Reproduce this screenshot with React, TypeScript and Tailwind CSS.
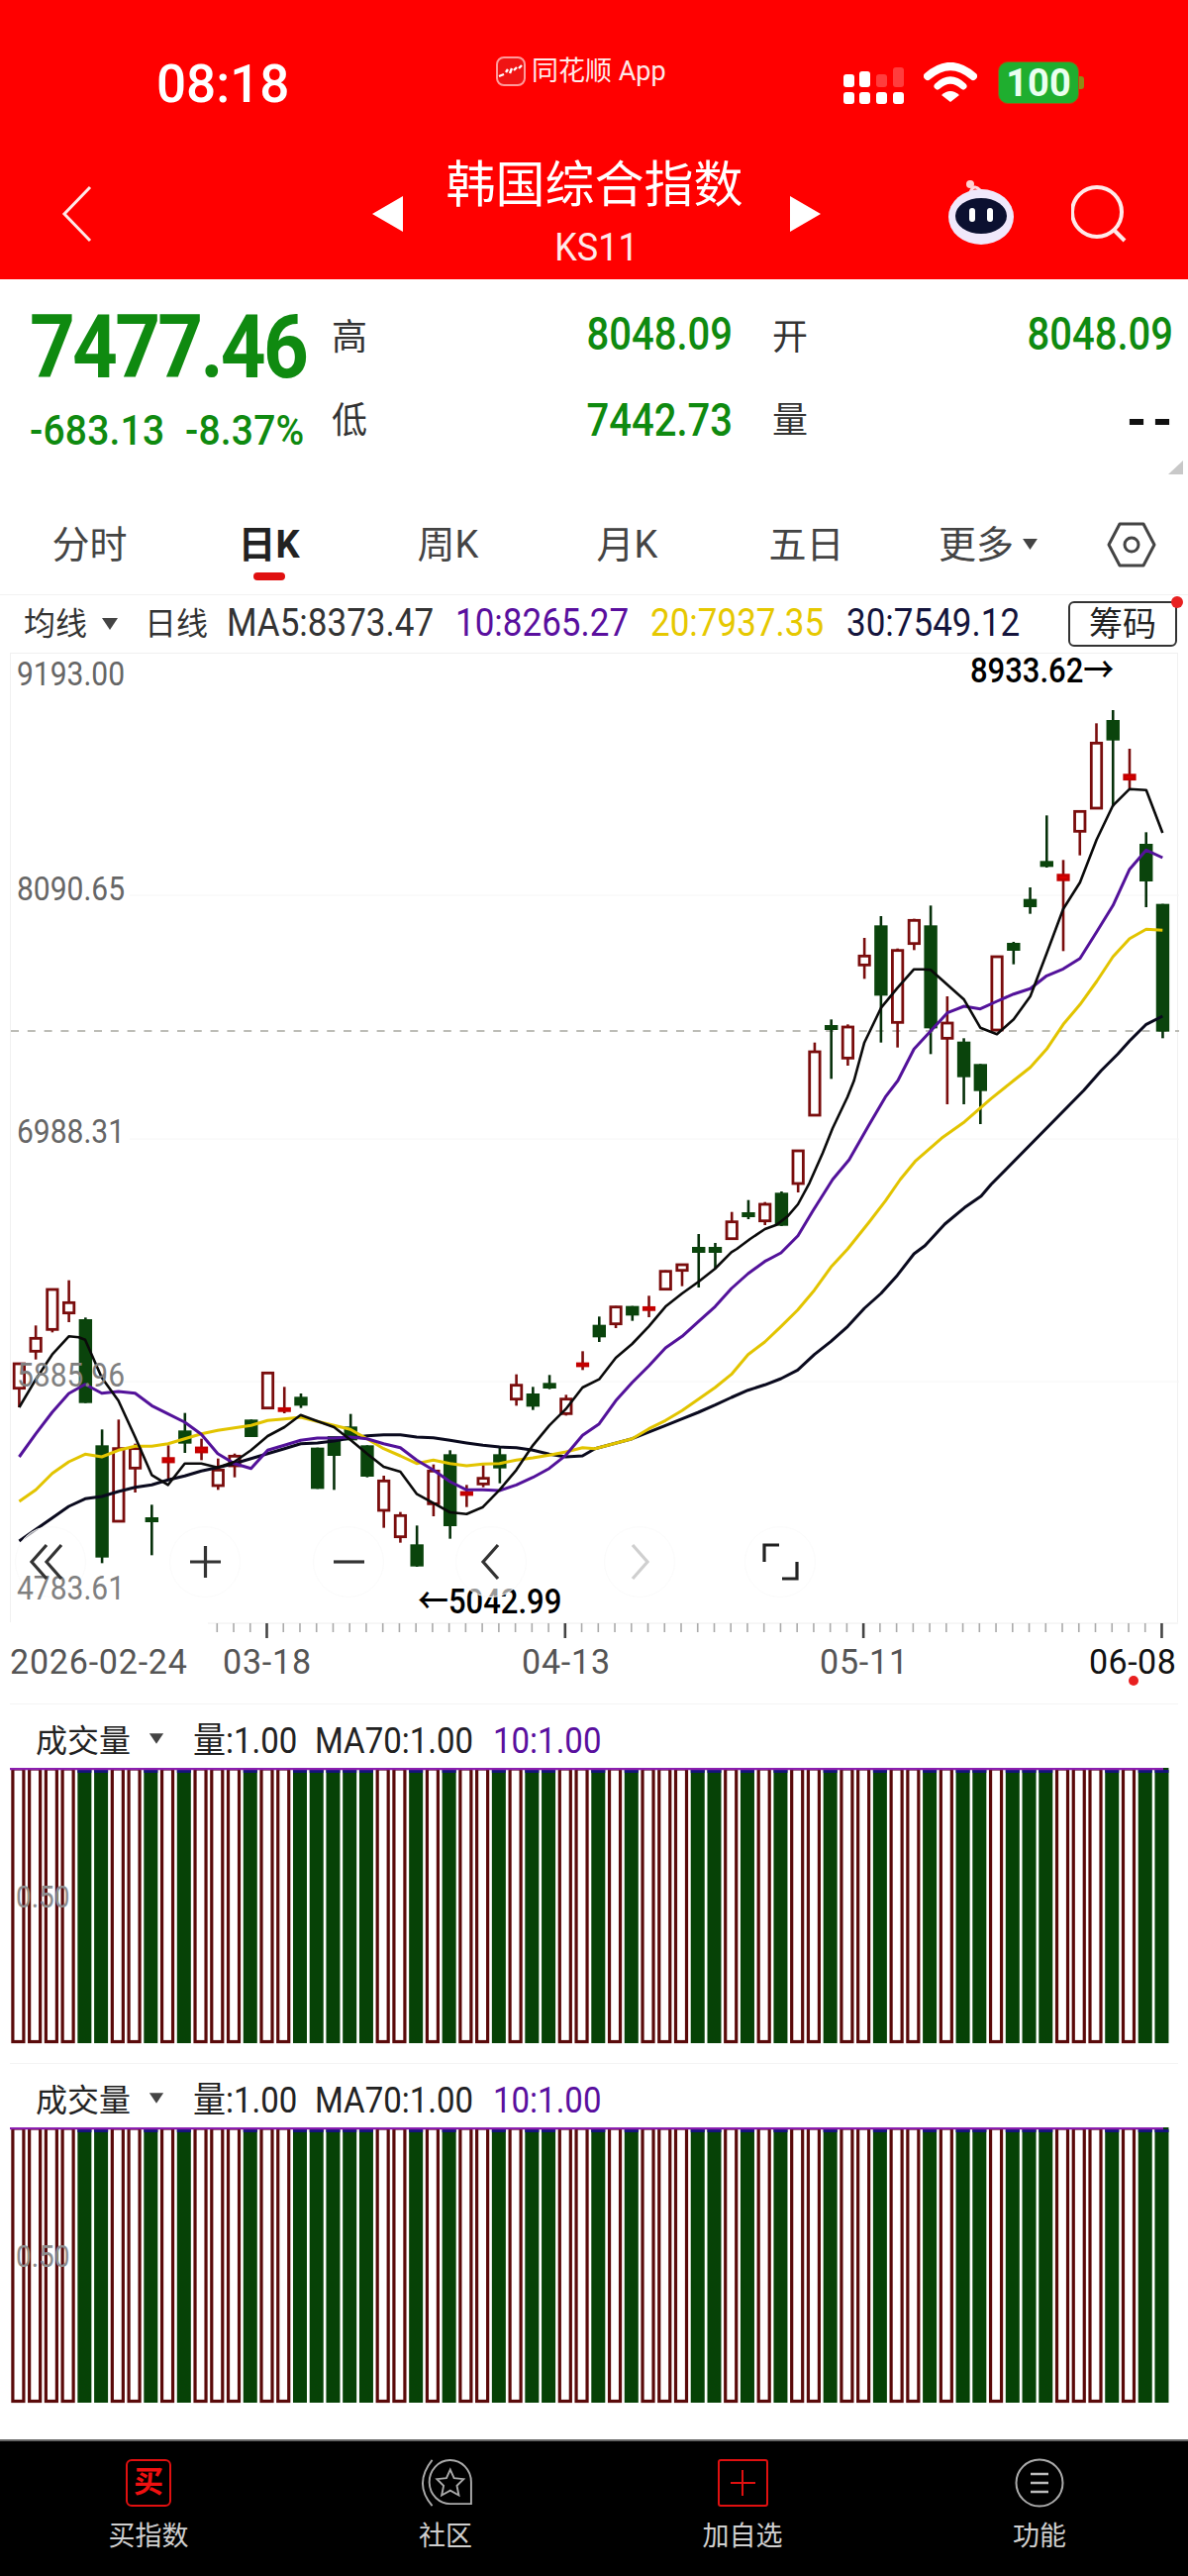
import React from "react";

type P = [number, number];
const z4 = (a: number[]): P[] => pairs(a).map(([x, y]) => [x / 2.613, 1250 + y / 3]);
const z5 = (a: number[]): P[] => pairs(a).map(([x, y]) => [600 + x / 2.613, 1250 + y / 3]);
const z9 = (a: number[]): P[] => pairs(a).map(([x, y]) => [600 + x / 3, 1090 + y / 3]);
const z3 = (a: number[]): P[] => pairs(a).map(([x, y]) => [600 + x / 2.613, 650 + y / 3]);
function pairs(a: number[]): P[] {
  const r: P[] = [];
  for (let i = 0; i < a.length; i += 2) r.push([a[i], a[i + 1]]);
  return r;
}
const pts = (p: P[]) => p.map(([x, y]) => `${x.toFixed(1)},${y.toFixed(1)}`).join(" ");

const ma5 = [
  ...z4([48,510,92,425,135,350,179,295,205,298,222,305,266,420,310,490,354,600,398,715,441,745,485,680,529,680,572,692,616,675,660,640,704,597,748,570,791,533,835,552,879,570,922,608,966,650,1010,690,1054,705,1097,772,1141,800,1185,828,1229,833,1272,812,1316,760,1360,700,1404,625,1447,565,1491,515,1535,450]),
  ...z5([11,425,55,360,98,318,142,265,186,205,230,165,273,130,317,90,360,40]),
  ...z9([430,510,470,480,515,450,550,437,585,410,615,375,650,310,690,220,720,145,765,50,785,0]),
  ...z3([711,1205,755,1100,798,1040,842,983,866,983,886,985,930,1030,974,1075,1017,1160,1061,1180,1105,1135,1149,1065,1192,935,1236,800,1280,720,1324,590,1367,487,1411,437,1455,440,1498,570]),
];
const ma10 = [
  ...z4([48,660,92,590,135,525,179,468,222,440,266,467,310,462,354,467,398,505,441,530,485,555,529,592,572,650,616,680,660,695,704,640,748,625,791,610,835,603,879,603,922,600,966,605,1010,620,1054,632,1097,670,1141,700,1185,735,1229,760,1272,760,1316,762,1360,745,1404,722,1447,695,1491,655,1535,595]),
  ...z5([11,560,55,490,98,435,142,385,186,330,230,295,273,250,317,205,360,150,404,105,448,68,491,42]),
  ...z9([615,470,660,395,720,300,770,240,830,135,880,50,918,0]),
  ...z3([842,1225,886,1170,930,1115,974,1095,1017,1103,1061,1080,1105,1058,1149,1042,1192,1003,1236,982,1280,950,1324,870,1367,790,1411,680,1455,622,1498,645]),
];
const ma20 = [
  ...z4([48,795,92,760,135,710,179,675,222,652,266,660,310,640,354,628,398,628,441,620,485,605,529,590,572,580,616,572,660,565,704,550,748,545,791,540,835,553,879,565,922,577,966,605,1010,635,1054,657,1097,680,1141,670,1185,680,1229,687,1272,682,1316,680,1360,670,1404,663,1447,655,1491,645,1535,632]),
  ...z5([0,635,98,605,142,575,186,550,230,520,273,485,317,450,360,410,404,350,448,312,491,265,535,215,579,155,623,85,667,30]),
  ...z9([830,430,880,365,925,300,970,245,1050,175,1120,125,1200,55]),
  ...z3([1105,1320,1149,1280,1192,1225,1236,1150,1280,1090,1324,1020,1367,945,1411,890,1455,862,1498,865]),
];
const ma30 = [
  ...z4([48,915,92,880,135,845,179,810,222,787,266,780,310,765,354,752,398,745,441,730,485,718,529,703,572,692,616,680,660,665,704,650,748,635,791,620,835,618,879,612,922,603,966,596,1010,593,1054,593,1097,600,1141,602,1185,610,1229,618,1272,625,1316,630,1360,632,1404,640,1447,652,1491,660,1535,657]),
  ...z5([0,635,98,605,186,565,230,545,273,525,317,503,360,480,404,458,448,442,491,423,535,397,579,350,623,310,667,265,711,210,755,165,798,110,842,45]),
  ...z9([1000,500,1060,435,1120,385,1170,350,1200,315]),
  ...z3([1290,1350,1336,1290,1380,1240,1411,1200,1455,1150,1498,1125]),
];

// up?, wick top, body top, body bottom, wick bottom
type C = [boolean, number, number, number, number];
const a = (u: boolean, w1: number, b1: number, b2: number, w2: number): C => [u, 1250 + w1 / 3, 1250 + b1 / 3, 1250 + b2 / 3, 1250 + w2 / 3];
const b = (u: boolean, w1: number, b1: number, b2: number, w2: number): C => [u, 650 + w1 / 3, 650 + b1 / 3, 650 + b2 / 3, 650 + w2 / 3];
const c = (u: boolean, w1: number, b1: number, b2: number, w2: number): C => [u, w1, b1, b2, w2];
const U = true;
const D = false;
const candles: C[] = [
  a(U,375,375,455,510), a(U,262,298,343,365), a(U,150,150,277,283), a(U,125,190,227,252),
  a(D,238,243,497,497), a(D,577,625,965,982), a(U,547,632,858,858), a(U,620,632,697,768),
  a(D,805,843,858,958), a(U,625,662,678,730), a(D,527,580,620,648), a(U,605,630,648,670),
  a(U,665,697,750,760), a(U,650,655,690,722), a(D,547,547,600,600), a(U,403,403,515,515),
  a(U,448,511,522,528), a(D,468,478,505,512), a(D,632,632,757,757), a(D,597,597,657,760),
  a(D,530,568,610,610), a(D,625,625,720,722), a(U,717,730,825,875), a(U,827,835,905,920),
  a(D,868,925,992,993), a(U,683,700,805,840), a(D,640,652,870,908), a(U,745,765,775,812),
  a(U,685,722,745,752), a(D,632,652,695,740), a(U,410,440,488,505), a(D,448,468,508,518),
  a(D,412,436,453,455), a(U,472,482,532,535), a(U,340,375,387,397), a(D,235,260,298,312),
  a(U,203,203,260,270), a(D,203,203,232,248), a(U,172,205,215,237), a(U,95,95,155,155),
  a(U,75,75,98,143), c(D,1245,1258,1264,1299), c(D,1254,1258,1264,1280), c(U,1222.7,1231.7,1250.7,1251),
  c(D,1210.7,1223,1228,1230), c(U,1212.7,1214,1232.7,1236), c(D,1202,1203.3,1236.7,1237), c(U,1160,1160,1195,1203),
  b(U,1205,1230,1428,1428), b(D,1135,1152,1167,1315), b(U,1150,1155,1255,1275), b(U,888,940,973,1012),
  b(D,822,850,1063,1205), b(U,920,923,1147,1220), b(U,830,832,908,925), b(D,790,850,1162,1240),
  b(U,1065,1143,1195,1392), b(D,1192,1202,1310,1392), b(D,1270,1270,1352,1452), b(U,942,942,1170,1170),
  b(D,900,903,927,968), b(D,735,770,795,815), b(D,517,655,673,675), b(U,652,695,715,928),
  b(U,502,502,568,638), b(U,238,295,498,498), b(D,198,228,290,490), b(U,315,392,410,435),
  b(D,568,603,717,795), b(D,785,785,1172,1192),
];
const cx = (i: number) => 18.4 + 16.74 * i;

const RED = "#7a0d0d";
const GREEN = "#0a440c";

function Candles() {
  return (
    <>
      {candles.map(([up, w1, b1, b2, w2], i) => {
        const x = cx(i);
        const small = b2 - b1 < 7;
        const stroke = up ? (small ? "#c40000" : RED) : GREEN;
        return (
          <g key={i}>
            <line x1={x} x2={x} y1={w1} y2={w2} stroke={up ? RED : "#06300a"} strokeWidth={2.6} />
            {up ? (
              <rect x={x - 5.2} y={b1 + 1} width={10.4} height={Math.max(b2 - b1 - 2, 2)} fill={small ? "#e00000" : "#fff"} stroke={stroke} strokeWidth={2.8} />
            ) : (
              <rect x={x - 6.7} y={b1} width={13.4} height={b2 - b1} fill={GREEN} />
            )}
          </g>
        );
      })}
    </>
  );
}

function Caret({ className }: { className: string }) {
  return (
    <svg viewBox="0 0 18 14" className={className}>
      <polygon points="1,1 17,1 9,13" fill="#444" />
    </svg>
  );
}

function Chart() {
  return (
    <svg viewBox="0 659 1200 979" className="absolute left-[-10px] top-0 w-[1200px] h-[979px]">
      <line x1="130" x2="1190" y1="903" y2="903" stroke="#f6f6f6" strokeWidth="1" />
      <line x1="130" x2="1190" y1="1149" y2="1149" stroke="#f6f6f6" strokeWidth="1" />
      <line x1="10" x2="1190" y1="1394" y2="1394" stroke="#f6f6f6" strokeWidth="1" />
      <line x1="10" x2="1190" y1="1040" y2="1040" stroke="#a8a8a0" strokeWidth="1.5" strokeDasharray="8 8.8" />
      <Candles />
      <polyline points={pts(ma30)} fill="none" stroke="#0a0a1e" strokeWidth="3" strokeLinejoin="round" />
      <polyline points={pts(ma20)} fill="none" stroke="#e2c400" strokeWidth="3" strokeLinejoin="round" />
      <polyline points={pts(ma10)} fill="none" stroke="#53129a" strokeWidth="3" strokeLinejoin="round" />
      <polyline points={pts(ma5)} fill="none" stroke="#0a0a0a" strokeWidth="2.6" strokeLinejoin="round" />
    </svg>
  );
}

function Ticks() {
  const items = [];
  for (let i = 12; i < 70; i++) {
    const major = i === 15 || i === 33 || i === 51 || i === 69;
    items.push(
      <line key={i} x1={cx(i)} x2={cx(i)} y1={1} y2={major ? 16 : 10} stroke={major ? "#444" : "#aaa"} strokeWidth={major ? 2.6 : 1.6} />
    );
  }
  return (
    <svg viewBox="0 0 1200 20" className="absolute left-0 top-0 w-[1200px] h-[20px]">
      <line x1="210" x2="1190" y1="1" y2="1" stroke="#eeeeee" strokeWidth="1" />
      {items}
    </svg>
  );
}

function VolumeBars() {
  return (
    <svg viewBox="0 0 1200 280" className="absolute left-[-10px] top-0 w-[1200px] h-[280px]">
      {candles.map(([up], i) => {
        const x = cx(i);
        return up ? (
          <rect key={i} x={x - 5.5} y={1} width={11} height={275.5} fill="#fff" stroke="#5a0a0a" strokeWidth={3.2} />
        ) : (
          <g key={i}>
            <rect x={x - 7} y={0} width={14} height={278} fill="#064206" />
            <rect x={x - 7} y={2} width={14} height={3} fill="#14127a" />
          </g>
        );
      })}
      <line x1="10" x2="1175" y1="1" y2="1" stroke="#8b1fb0" strokeWidth="2.6" />
    </svg>
  );
}

function VolumePanel() {
  return (
    <section className="ml-[10px] w-[1180px] h-[345px] border-t border-[#f4f4f4] shrink-0">
      <div className="h-[64px] pt-[10px] flex items-center pl-[26px] text-[33px] text-[#222] whitespace-nowrap">
        <span className="text-[32px] w-[97px]">成交量</span>
        <Caret className="ml-[17px] w-[16px] h-[13px] mb-[6px]" />
        <span className="ml-[29px] w-[105px] scale-y-[1.1]">量:1.00</span>
        <span className="ml-[18px] w-[162px] scale-y-[1.1]">MA70:1.00</span>
        <span className="ml-[18px] text-[#5a0f9e] scale-y-[1.1]">10:1.00</span>
      </div>
      <div className="relative h-[280px]">
        <VolumeBars />
        <span className="absolute left-[6px] top-[113px] text-[28px] leading-[36px] text-[#8d8d8d] scale-y-[1.15]">0.50</span>
      </div>
    </section>
  );
}

function Circle({ className }: { className: string }) {
  return <div className={`absolute top-[881px] w-[72px] h-[72px] rounded-full bg-white/60 border border-[#fbfbfb] ${className}`} />;
}

export default function App() {
  return (
    <div className="w-[1200px] h-[2601px] bg-white flex flex-col overflow-hidden font-[Roboto,'Noto_Sans_CJK_SC',sans-serif]">
      {/* red header */}
      <header className="h-[282px] bg-[#ff0000] text-white shrink-0">
        <div className="h-[150px] flex items-start">
          <span className="ml-[158px] mt-[53px] w-[342px] text-[53px] leading-[64px] font-medium">08:18</span>
          <div className="w-[352px] mt-[55px] h-[34px] flex items-center">
            <svg viewBox="0 0 32 32" className="w-[32px] h-[32px] shrink-0">
              <rect x="2" y="2" width="28" height="28" rx="7" fill="#f01414" stroke="#ff9a9a" strokeWidth="2" />
              <path d="M4 21 L9 19 M11 17 L13 14 M15 18 L17 13 M19 15 L22 12 M24 13 L27 10" stroke="#fff" strokeWidth="2.4" fill="none" />
            </svg>
            <span className="ml-[5px] text-[27px] leading-[34px] text-[#ffe9e9]">同花顺 App</span>
          </div>
          <svg viewBox="0 0 62 40" className="mt-[68px] w-[62px] h-[40px] shrink-0">
            <rect x="0" y="7" width="11" height="13" rx="3" fill="#fff" />
            <rect x="16" y="4" width="11" height="16" rx="3" fill="#fff" />
            <rect x="33" y="7" width="11" height="13" rx="3" fill="#ff3d3d" />
            <rect x="50" y="0" width="11" height="20" rx="3" fill="#ff3d3d" />
            <rect x="0" y="25" width="11" height="12" rx="3" fill="#fff" />
            <rect x="16" y="25" width="11" height="12" rx="3" fill="#fff" />
            <rect x="33" y="25" width="11" height="12" rx="3" fill="#fff" />
            <rect x="50" y="25" width="11" height="12" rx="3" fill="#fff" />
          </svg>
          <svg viewBox="0 0 54 40" className="ml-[19px] mt-[63px] w-[54px] h-[40px] shrink-0">
            <path d="M4 14 Q27 -6 50 14" fill="none" stroke="#fff" strokeWidth="8" strokeLinecap="round" />
            <path d="M14 24 Q27 12 40 24" fill="none" stroke="#fff" strokeWidth="7" strokeLinecap="round" />
            <path d="M18 33 Q27 25 36 33 L27 40 Z" fill="#fff" />
          </svg>
          <div className="ml-[21px] mt-[62px] w-[82px] h-[43px] rounded-[10px] bg-[#1fae2f] border border-[#b34a10] flex items-center justify-center text-[38px] leading-none font-bold text-[#eafff0] shrink-0">100</div>
          <div className="mt-[77px] w-[5px] h-[13px] rounded-r-[3px] bg-[#8f8a16] shrink-0" />
        </div>
        <div className="h-[132px] flex items-center">
          <div className="w-[376px] pl-[62px] shrink-0">
            <svg viewBox="0 0 32 58" className="w-[32px] h-[58px]">
              <path d="M29 2 L3 29 L29 56" fill="none" stroke="#ffe9e9" strokeWidth="3" />
            </svg>
          </div>
          <svg viewBox="0 0 31 36" className="w-[31px] h-[36px] shrink-0">
            <polygon points="31,0 31,36 0,18" fill="#fff" />
          </svg>
          <div className="w-[391px] h-full flex flex-col items-center shrink-0">
            <span className="mt-[7px] ml-[-4px] text-[50px] leading-[60px] whitespace-nowrap">韩国综合指数</span>
            <span className="mt-[11px] text-[36px] leading-[44px] text-[#ffe9e9] scale-y-[1.1]">KS11</span>
          </div>
          <svg viewBox="0 0 31 36" className="w-[31px] h-[36px] shrink-0">
            <polygon points="0,0 0,36 31,18" fill="#fff" />
          </svg>
          <svg viewBox="0 0 70 66" className="ml-[127px] w-[70px] h-[66px] shrink-0 mt-[-2px]">
            <path d="M24 12 Q28 3 34 10" fill="none" stroke="#ffd9e0" strokeWidth="3" />
            <circle cx="24" cy="4" r="4" fill="#ffd0d0" />
            <ellipse cx="35" cy="37" rx="33" ry="28" fill="#f0e8fb" />
            <ellipse cx="35" cy="36" rx="26" ry="18" fill="#0b1030" />
            <rect x="23" y="28" width="6" height="14" rx="3" fill="#fff" />
            <rect x="41" y="28" width="6" height="14" rx="3" fill="#fff" />
          </svg>
          <svg viewBox="0 0 56 58" className="ml-[56px] w-[56px] h-[58px] shrink-0">
            <circle cx="26" cy="27" r="25" fill="none" stroke="#ffeaea" strokeWidth="4" />
            <path d="M44 46 L54 56" stroke="#ffeaea" strokeWidth="4" />
          </svg>
        </div>
      </header>

      {/* quote */}
      <section className="relative h-[218px] pl-[30px] pt-[17px] flex shrink-0">
        <div className="w-[305px] shrink-0 text-[#0f8a10]">
          <div className="mt-[17px] h-[70px] text-[80px] leading-[70px] font-bold tracking-[-2.8px] whitespace-nowrap scale-y-[1.12]">7477.46</div>
          <div className="mt-[29px] h-[40px] flex text-[39px] leading-[40px] font-medium whitespace-nowrap scale-y-[1.08]">
            <span className="w-[157px] tracking-[0.2px]">-683.13</span>
            <span className="tracking-[0.2px]">-8.37%</span>
          </div>
        </div>
        <div className="grid grid-cols-[35px_370px_75px_370px] auto-rows-[84px] items-center text-[#333] text-[36px]">
          <span>高</span>
          <span className="text-right text-[#0f8a10] text-[40px] font-medium mt-[-6px] scale-y-[1.14]">8048.09</span>
          <span className="pl-[40px]">开</span>
          <span className="text-right text-[#0f8a10] text-[40px] font-medium mt-[-6px] scale-y-[1.14]">8048.09</span>
          <span>低</span>
          <span className="text-right text-[#0f8a10] text-[40px] font-medium scale-y-[1.14]">7442.73</span>
          <span className="pl-[40px]">量</span>
          <span className="text-right text-[#111] text-[50px] font-bold font-['Liberation_Mono'] tracking-[-4px]">--</span>
        </div>
        <svg viewBox="0 0 15 14" className="absolute right-[5px] top-[183px] w-[15px] h-[14px]">
          <polygon points="15,0 15,14 0,14" fill="#c8c8c8" />
        </svg>
      </section>

      {/* tabs */}
      <nav className="h-[100px] flex items-center text-[#444] text-[38px] shrink-0">
        <span className="w-[181px] text-center">分时</span>
        <span className="relative w-[181px] text-center font-bold text-[#222]">
          日K
          <span className="absolute left-[75px] top-[56px] w-[32px] h-[8px] rounded-full bg-[#e01010]" />
        </span>
        <span className="w-[181px] text-center">周K</span>
        <span className="w-[181px] text-center">月K</span>
        <span className="w-[181px] text-center">五日</span>
        <span className="w-[181px] flex items-center justify-center pl-[6px]">
          更多
          <Caret className="ml-[8px] w-[17px] h-[13px] mb-[2px]" />
        </span>
        <div className="flex-1 flex justify-center">
          <svg viewBox="0 0 50 46" className="w-[50px] h-[46px]">
            <polygon points="2,23 13,2 37,2 48,23 37,44 13,44" fill="none" stroke="#444" strokeWidth="3" strokeLinejoin="round" />
            <circle cx="25" cy="23" r="7" fill="none" stroke="#444" strokeWidth="3" />
          </svg>
        </div>
      </nav>

      {/* MA legend */}
      <div className="relative h-[59px] flex items-center border-t border-[#f2f2f2] text-[35px] text-[#333] whitespace-nowrap shrink-0">
        <span className="ml-[24px] w-[64px] text-[32px]">均线</span>
        <Caret className="ml-[14px] w-[18px] h-[14px]" />
        <span className="ml-[26px] w-[64px] text-[32px]">日线</span>
        <span className="ml-[19px] w-[211px] scale-y-[1.1]">MA5:8373.47</span>
        <span className="ml-[20px] w-[177px] text-[#5a0f9e] scale-y-[1.1]">10:8265.27</span>
        <span className="ml-[20px] w-[176px] text-[#e6c800] scale-y-[1.1]">20:7937.35</span>
        <span className="ml-[22px] w-[175px] text-[#14143c] scale-y-[1.1]">30:7549.12</span>
        <span className="ml-[49px] w-[110px] h-[46px] rounded-md border-2 border-[#333] text-[34px] leading-[42px] text-center text-[#222]">筹码</span>
        <span className="absolute left-[1183px] top-[1px] w-[12px] h-[12px] rounded-full bg-[#e82020]" />
      </div>

      {/* main chart */}
      <div className="relative ml-[10px] w-[1180px] h-[979px] border-x border-t border-[#f0f0f0] box-border shrink-0">
        <Chart />
        <span className="absolute left-[6px] top-[3px] text-[30px] leading-[36px] text-[#666] scale-y-[1.12]">9193.00</span>
        <span className="absolute left-[6px] top-[220px] text-[30px] leading-[36px] text-[#666] scale-y-[1.12]">8090.65</span>
        <span className="absolute left-[6px] top-[465px] text-[30px] leading-[36px] text-[#666] scale-y-[1.12]">6988.31</span>
        <span className="absolute left-[6px] top-[711px] text-[30px] leading-[36px] text-[#808080] scale-y-[1.12]">5885.96</span>
        <span className="absolute left-[969px] top-0 text-[31px] leading-[36px] font-medium text-black whitespace-nowrap scale-y-[1.14]">8933.62→</span>
        <span className="absolute left-[411px] top-[940px] text-[31px] leading-[36px] font-medium text-black whitespace-nowrap scale-y-[1.14]">←5042.99</span>
        <Circle className="left-[4px]" />
        <Circle className="left-[160px]" />
        <Circle className="left-[305px]" />
        <Circle className="left-[449px]" />
        <Circle className="left-[599px]" />
        <Circle className="left-[741px]" />
        <span className="absolute left-[6px] top-[926px] text-[30px] leading-[36px] text-[#808080] scale-y-[1.12]">4783.61</span>
        <svg viewBox="0 0 800 40" className="absolute left-[18px] top-[897px] w-[800px] h-[40px]">
          <path d="M18 3 L3 20 L18 37 M33 3 L18 20 L33 37" fill="none" stroke="#333" strokeWidth="3.2" />
          <path d="M163 20 H194 M178.500 4 V36" fill="none" stroke="#333" strokeWidth="3.2" />
          <path d="M308 20 H339" fill="none" stroke="#333" strokeWidth="3.2" />
          <path d="M474 3 L459 20 L474 37" fill="none" stroke="#333" strokeWidth="3.2" />
          <path d="M610 3 L625 20 L610 37" fill="none" stroke="#cfcfcf" strokeWidth="3.2" />
          <path d="M743 20 V3 H758 M776 20 V37 H761" fill="none" stroke="#222" strokeWidth="3.2" />
        </svg>
      </div>

      {/* time axis */}
      <div className="relative h-[82px] shrink-0">
        <Ticks />
        <span className="absolute left-[10px] top-[21px] text-[34px] leading-[38px] tracking-[0.8px] text-[#555] scale-y-[1.04]">2026-02-24</span>
        <span className="absolute left-[225px] top-[21px] text-[34px] leading-[38px] tracking-[0.8px] text-[#555] scale-y-[1.04]">03-18</span>
        <span className="absolute left-[527px] top-[21px] text-[34px] leading-[38px] tracking-[0.8px] text-[#555] scale-y-[1.04]">04-13</span>
        <span className="absolute left-[828px] top-[21px] text-[34px] leading-[38px] tracking-[0.8px] text-[#555] scale-y-[1.04]">05-11</span>
        <span className="absolute left-[1100px] top-[21px] text-[34px] leading-[38px] tracking-[0.5px] text-[#111] scale-y-[1.04]">06-08</span>
        <span className="absolute left-[1140px] top-[54px] w-[10px] h-[10px] rounded-full bg-[#e82020]" />
      </div>

      <VolumePanel />
      <div className="h-[18px] shrink-0" />
      <VolumePanel />
      <div className="flex-1" />

      {/* bottom bar */}
      <footer className="h-[138px] bg-black border-t-2 border-[#666] flex text-[#cfcfcf] text-[27px] shrink-0">
        <div className="w-1/4 flex flex-col items-center pt-[18px]">
          <div className="w-[46px] h-[48px] rounded-[6px] border-2 border-[#e01010] text-[#f01010] text-[30px] leading-[42px] font-bold text-center">买</div>
          <span className="mt-[10px] leading-[40px]">买指数</span>
        </div>
        <div className="w-1/4 flex flex-col items-center pt-[18px]">
          <svg viewBox="0 0 56 50" className="w-[56px] h-[48px]">
            <path d="M14 1 Q-6 26 14 49" fill="none" stroke="#aaa" strokeWidth="2" />
            <path d="M55 47 H34 A22 23 0 1 1 55 24 Z" fill="none" stroke="#aaa" strokeWidth="2" />
            <polygon points="33,11 37,20 47,21 40,28 42,38 33,33 24,38 26,28 19,21 29,20" fill="none" stroke="#aaa" strokeWidth="2" />
          </svg>
          <span className="mt-[10px] leading-[40px]">社区</span>
        </div>
        <div className="w-1/4 flex flex-col items-center pt-[18px]">
          <div className="relative w-[51px] h-[48px] rounded-[3px] border-2 border-[#e01010]">
            <div className="absolute left-[11px] top-[21px] w-[25px] h-[2px] bg-[#e01010]" />
            <div className="absolute left-[22px] top-[9px] w-[2px] h-[26px] bg-[#e01010]" />
          </div>
          <span className="mt-[10px] leading-[40px]">加自选</span>
        </div>
        <div className="w-1/4 flex flex-col items-center pt-[18px]">
          <svg viewBox="0 0 50 50" className="w-[50px] h-[50px] mt-[-1px]">
            <circle cx="25" cy="25" r="23.500" fill="none" stroke="#aaa" strokeWidth="2" />
            <path d="M16 16 H34 M16 25 H34 M16 34 H34" stroke="#bbb" strokeWidth="2.600" />
          </svg>
          <span className="mt-[9px] leading-[40px]">功能</span>
        </div>
      </footer>
    </div>
  );
}
